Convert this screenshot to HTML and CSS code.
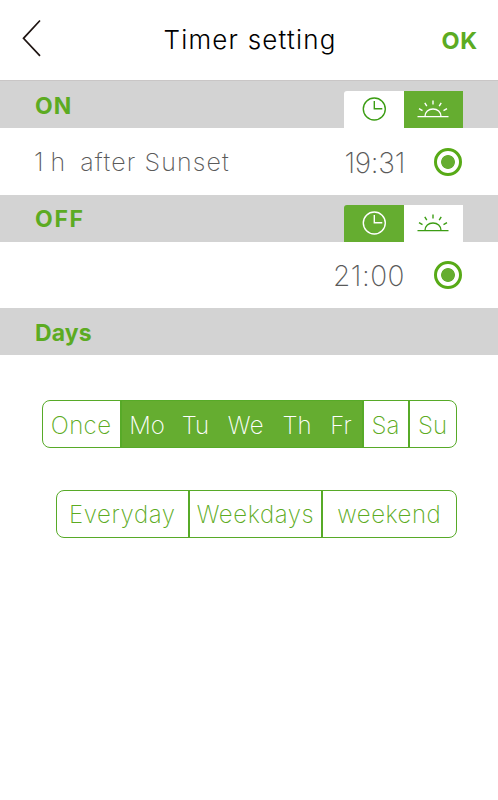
FILE: index.html
```html
<!DOCTYPE html>
<html lang="en">
<head>
    <meta charset="UTF-8">
    <meta name="viewport" content="width=device-width, initial-scale=1.0">
    <title>Timer setting</title>
    <link rel="stylesheet" href="styles.css">
</head>
<body>
    <!-- shared icons -->
    <svg width="0" height="0" class="icon-defs">
        <symbol id="clock" viewBox="0 0 32 24">
            <circle cx="16.300" cy="12" r="11"/>
            <path d="M16.300 4v7.700h8"/>
        </symbol>
        <symbol id="sunset" viewBox="0 0 32 24">
            <path d="M.5 19.600h31M8 19.500c0-4.500 3.500-7.500 8-7.500s8 3 8 7.500M16 3.500v4M7.800 5.800l2 3.400M24.200 5.800l-2 3.400M2 11.700l3.500 2M30 11.700l-3.500 2"/>
        </symbol>
    </svg>

    <header class="header">
        <button class="back" aria-label="Back">
            <svg width="20" height="38" viewBox="0 0 20 38"><path d="M18 1.500L1.500 19.300 18 36.800"/></svg>
        </button>
        <h1>Timer setting</h1>
        <button class="ok">OK</button>
    </header>

    <section class="band band-on">
        <h2 class="on">ON</h2>
        <div class="tabs">
            <button class="tab"><svg><use href="#clock"/></svg></button>
            <button class="tab active"><svg><use href="#sunset"/></svg></button>
        </div>
    </section>
    <div class="row">
        <span class="rule"><span class="hour">1 h</span><span class="event">after Sunset</span></span>
        <span class="time time-on">19:31</span>
        <span class="radio"></span>
    </div>

    <section class="band">
        <h2 class="off">OFF</h2>
        <div class="tabs">
            <button class="tab active"><svg><use href="#clock"/></svg></button>
            <button class="tab"><svg><use href="#sunset"/></svg></button>
        </div>
    </section>
    <div class="row row-off">
        <span class="time time-off">21:00</span>
        <span class="radio"></span>
    </div>

    <section class="band">
        <h2 class="days-label">Days</h2>
    </section>

    <div class="group days">
        <button class="once">Once</button>
        <button class="selected mo">Mo</button>
        <button class="selected tu">Tu</button>
        <button class="selected we">We</button>
        <button class="selected th">Th</button>
        <button class="selected fr">Fr</button>
        <button class="sa">Sa</button>
        <button class="su">Su</button>
    </div>

    <div class="group presets">
        <button class="everyday">Everyday</button>
        <button class="weekdays">Weekdays</button>
        <button class="weekend">weekend</button>
    </div>
</body>
</html>
```

FILE: styles.css
```css
* {
    box-sizing: border-box;
}
body {
    margin: 0;
    background-color: #fff;
    font-family: Inter, "Open Sans", sans-serif;
    color: #5a5a5a;
}
.icon-defs {
    display: block;
}
svg {
    display: block;
    fill: none;
}
button {
    margin: 0;
    padding: 0;
    border: none;
    background: none;
    font: inherit;
    color: #5cab22;
    cursor: pointer;
}
h1, h2 {
    margin: 0;
}
.header {
    display: flex;
    align-items: center;
    height: 80px;
    padding: 0 20px 0 22px;
}
.back {
    width: 60px;
    margin-top: -4px;
}
.back svg {
    stroke: #1e1412;
    stroke-width: 1.7;
}
.header h1 {
    flex: 1;
    font-size: 26px;
    font-weight: 300;
    letter-spacing: 1.2px;
    line-height: 80px;
    text-align: center;
    color: #000;
}
.ok {
    width: 60px;
    font-size: 23.5px;
    font-weight: 700;
    letter-spacing: .8px;
    text-align: right;
}
.band {
    display: flex;
    justify-content: space-between;
    align-items: flex-end;
    height: 47px;
    padding: 0 35px;
    background-color: #d3d3d3;
}
.band h2 {
    padding-top: 2px;
    font-size: 23px;
    font-weight: 700;
    line-height: 45px;
    color: #5cab22;
}
.band .on {
    padding-top: 4px;
    line-height: 43px;
    letter-spacing: 1px;
}
.band .off {
    letter-spacing: 1.7px;
}
.band .days-label {
    padding-top: 3px;
    line-height: 44px;
    letter-spacing: .1px;
}
.band-on {
    height: 48px;
    border-top: 1px solid #c9c6c6;
}
.tabs {
    display: flex;
    width: 119px;
    height: 37px;
    overflow: hidden;
    border-radius: 3px 0 0 0;
}
.tab {
    flex: 1;
    display: flex;
    justify-content: center;
    padding-top: 6px;
    background-color: #fff;
}
.tab svg {
    width: 32px;
    height: 24px;
    stroke: #3c9d14;
    stroke-width: 1.4;
}
.tab.active {
    background-color: #65ad30;
}
.tab.active svg {
    stroke: #fff;
}
.row {
    display: flex;
    align-items: center;
    justify-content: flex-end;
    height: 67px;
    padding: 0 36px 0 35px;
}
.row-off {
    height: 66px;
}
.rule {
    display: flex;
    flex: 1;
    gap: 15px;
    font-size: 25px;
    font-weight: 200;
}
.hour {
    margin-left: -1px;
}
.event {
    letter-spacing: 1.1px;
}
.time {
    margin-right: 29px;
    padding-top: 2px;
    font-size: 28px;
    font-weight: 200;
}
.time-on {
    letter-spacing: -.3px;
}
.time-off {
    letter-spacing: .5px;
}
.radio {
    width: 28px;
    height: 28px;
    border: 3px solid #57aa16;
    border-radius: 50%;
    background: radial-gradient(circle, #65ad30 6.500px, #fff 7.300px);
}
.group {
    display: flex;
    height: 48px;
    border: 1.500px solid #57aa28;
    border-radius: 8px;
    overflow: hidden;
    font-size: 24px;
    font-weight: 200;
}
.group button {
    padding-top: 2px;
}
.group button + button {
    border-left: 2px solid #57aa28;
}
.days {
    width: 415px;
    margin: 45px 0 0 41.500px;
}
.presets {
    width: 401px;
    margin: 41.500px 0 0 55.500px;
}
.group .selected {
    background-color: #65ad30;
    color: #fff;
}
.group .selected + .selected {
    border-left: none;
}
.once {
    width: 77px;
    letter-spacing: .4px;
}
.mo {
    width: 53px;
}
.tu {
    width: 46px;
}
.we {
    width: 55px;
    letter-spacing: .5px;
}
.th {
    width: 47px;
}
.fr {
    width: 41px;
}
.sa {
    width: 46px;
}
.su {
    flex: 1;
}
.everyday {
    width: 131.500px;
    letter-spacing: .6px;
}
.weekdays {
    width: 133px;
    letter-spacing: .6px;
}
.weekend {
    flex: 1;
    letter-spacing: .5px;
}
```
